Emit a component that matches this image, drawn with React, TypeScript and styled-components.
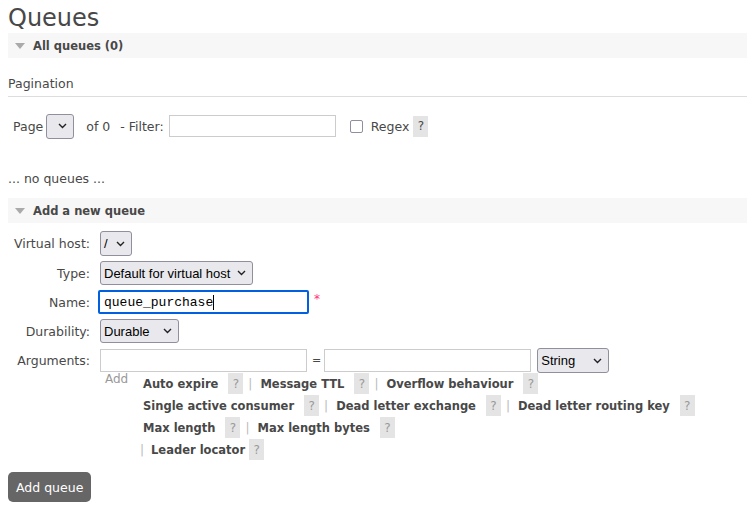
import React from 'react'
import styled, { createGlobalStyle } from 'styled-components'

const GlobalStyle = createGlobalStyle`
  html, body {
    margin: 0;
    padding: 0;
    background: #fff;
  }
  body {
    font-family: "DejaVu Sans", Verdana, sans-serif;
    font-size: 12px;
    color: #484848;
  }
`

const Page = styled.div`
  padding: 0 0 0 8px;
`

const Title = styled.h1`
  margin: 0;
  padding-top: 3px;
  font-size: 24px;
  font-weight: normal;
  line-height: 30px;
  color: #484848;
`

const SectionBar = styled.div`
  display: flex;
  align-items: center;
  height: 25px;
  background: #f7f7f7;
  padding-left: 7px;
  margin-top: ${p => p.$top || 0}px;
`

const Arrow = styled.span`
  width: 0;
  height: 0;
  border-left: 5px solid transparent;
  border-right: 5px solid transparent;
  border-top: 6px solid #aaa;
  margin-right: 8px;
  margin-top: 1px;
`

const SectionTitle = styled.span`
  font-weight: bold;
  font-size: 11.5px;
  color: #484848;
`

const SubHeading = styled.div`
  margin-top: 18px;
  font-size: 12.5px;
  padding-bottom: 5px;
  border-bottom: 1px solid #ddd;
`

const PagerRow = styled.div`
  display: flex;
  align-items: center;
  margin-top: 16px;
  padding-left: 5px;
  font-size: 12.5px;
  height: 26px;
`

const Select = styled.div`
  display: inline-flex;
  align-items: center;
  justify-content: space-between;
  box-sizing: border-box;
  height: ${p => p.$h || 24}px;
  width: ${p => p.$w}px;
  padding: 0 6px 0 3px;
  border: 1px solid #8f8f9d;
  border-radius: 3px;
  background: #e9e9ed;
  color: #000;
  font-family: "Liberation Sans", Arial, sans-serif;
  font-size: 13px;
  white-space: nowrap;
`

const Chevron = () => (
  <svg width="9" height="6" viewBox="0 0 9 6">
    <path d="M1 1 L4.5 4.5 L8 1" fill="none" stroke="#222" strokeWidth="1.4" />
  </svg>
)

const TextBox = styled.div`
  box-sizing: border-box;
  width: ${p => p.$w}px;
  height: ${p => p.$h || 22}px;
  border: 1px solid #ccc;
  background: #fff;
`

const FocusBox = styled.div`
  box-sizing: border-box;
  display: flex;
  align-items: center;
  width: 211px;
  height: 24px;
  border: 2px solid #0060df;
  border-radius: 2px;
  padding-left: 4px;
  font-family: "Liberation Mono", monospace;
  font-size: 13px;
  color: #000;
`

const Caret = styled.span`
  display: inline-block;
  width: 1px;
  height: 15px;
  background: #000;
`

const Checkbox = styled.span`
  box-sizing: border-box;
  width: 13px;
  height: 13px;
  border: 1px solid #8f8f9d;
  border-radius: 2px;
  margin: 0 8px 0 14px;
`

const Help = styled.span`
  display: inline-flex;
  align-items: center;
  justify-content: center;
  width: 15px;
  height: 21px;
  background: #e4e4e4;
  color: ${p => (p.$dark ? '#484848' : '#999')};
  font-size: 12px;
  margin-left: ${p => p.$ml ?? 5}px;
`

const Gap = styled.span`
  display: inline-block;
  width: ${p => p.$w}px;
`

const NoItems = styled.div`
  margin-top: 33px;
  font-size: 12.5px;
  line-height: 14px;
`

const FormGrid = styled.div`
  display: grid;
  grid-template-columns: 82px auto;
  column-gap: 10px;
  row-gap: 5px;
  align-items: center;
  margin-top: ${p => p.$top ?? 8}px;
`

const Label = styled.div`
  text-align: right;
  font-size: 12.5px;
`

const Field = styled.div`
  display: flex;
  align-items: center;
  margin-left: ${p => p.$ml || 0}px;
`

const Required = styled.span`
  color: #f37;
  font-size: 12px;
  margin-left: 5px;
  margin-top: -6px;
`

const Equals = styled.span`
  margin: 0 3px 0 5px;
  font-size: 11px;
`

const ArgsBlock = styled.div`
  display: flex;
  align-items: flex-start;
  padding-left: 5px;
`

const AddLabel = styled.span`
  color: #999;
  font-size: 12px;
  width: 38px;
  margin-top: -1px;
`

const Shortcuts = styled.div`
  display: flex;
  flex-direction: column;
  row-gap: 1px;
`

const ShortcutLine = styled.div`
  display: flex;
  align-items: center;
  height: 21px;
  margin-left: ${p => p.$ml || 0}px;
`

const Shortcut = styled.span`
  font-weight: bold;
  font-size: 11.5px;
  color: #484848;
`

const Sep = styled.span`
  color: #bbb;
  margin: 0 ${p => p.$r ?? 8}px 0 ${p => p.$l ?? 5}px;
`

const AddButton = styled.button`
  margin-top: 12px;
  height: 30px;
  padding: 0 8px;
  border: none;
  border-radius: 5px;
  background: #666;
  color: #fff;
  font-family: "DejaVu Sans", sans-serif;
  font-size: 12.5px;
`

const lines: { items: string[]; lead?: boolean; ml?: number }[] = [
  { items: ['Auto expire', 'Message TTL', 'Overflow behaviour'] },
  { items: ['Single active consumer', 'Dead letter exchange', 'Dead letter routing key'] },
  { items: ['Max length', 'Max length bytes'] },
  { items: ['Leader locator'], lead: true, ml: -3 },
]

export default function App() {
  return (
    <Page>
      <GlobalStyle />
      <Title>Queues</Title>
      <SectionBar>
        <Arrow />
        <SectionTitle>All queues (0)</SectionTitle>
      </SectionBar>

      <SubHeading>Pagination</SubHeading>
      <PagerRow>
        Page<Gap $w={3} />
        <Select $w={28} $h={25}><span /><Chevron /></Select>
        <Gap $w={12} />of 0<Gap $w={10} />- Filter:<Gap $w={5} />
        <TextBox $w={167} />
        <Checkbox />
        Regex
        <Help $dark $ml={4}>?</Help>
      </PagerRow>

      <NoItems>... no queues ...</NoItems>

      <SectionBar $top={12}>
        <Arrow />
        <SectionTitle>Add a new queue</SectionTitle>
      </SectionBar>

      <FormGrid>
        <Label>Virtual host:</Label>
        <Field>
          <Select $w={32} $h={25}>/<Chevron /></Select>
        </Field>
        <Label>Type:</Label>
        <Field>
          <Select $w={153}>Default for virtual host<Chevron /></Select>
        </Field>
        <Label>Name:</Label>
        <Field $ml={-2}>
          <FocusBox>queue_purchase<Caret /></FocusBox>
          <Required>*</Required>
        </Field>
        <Label>Durability:</Label>
        <Field>
          <Select $w={79}>Durable<Chevron /></Select>
        </Field>
        <Label>Arguments:</Label>
        <Field>
          <TextBox $w={207} $h={23} />
          <Equals>=</Equals>
          <TextBox $w={207} $h={23} />
          <Gap $w={6} />
          <Select $w={72} $h={25}>String<Chevron /></Select>
        </Field>
      </FormGrid>

      <FormGrid $top={0}>
        <span />
        <ArgsBlock>
          <AddLabel>Add</AddLabel>
          <Shortcuts>
            {lines.map((line, i) => (
              <ShortcutLine key={i} $ml={line.ml}>
                {line.lead && <Sep $l={0} $r={7}>|</Sep>}
                {line.items.map((item, j) => (
                  <React.Fragment key={item}>
                    <Shortcut>{item}</Shortcut>
                    <Help $ml={line.lead ? 4 : 10}>?</Help>
                    {j < line.items.length - 1 && <Sep>|</Sep>}
                  </React.Fragment>
                ))}
              </ShortcutLine>
            ))}
          </Shortcuts>
        </ArgsBlock>
      </FormGrid>

      <AddButton>Add queue</AddButton>
    </Page>
  )
}
